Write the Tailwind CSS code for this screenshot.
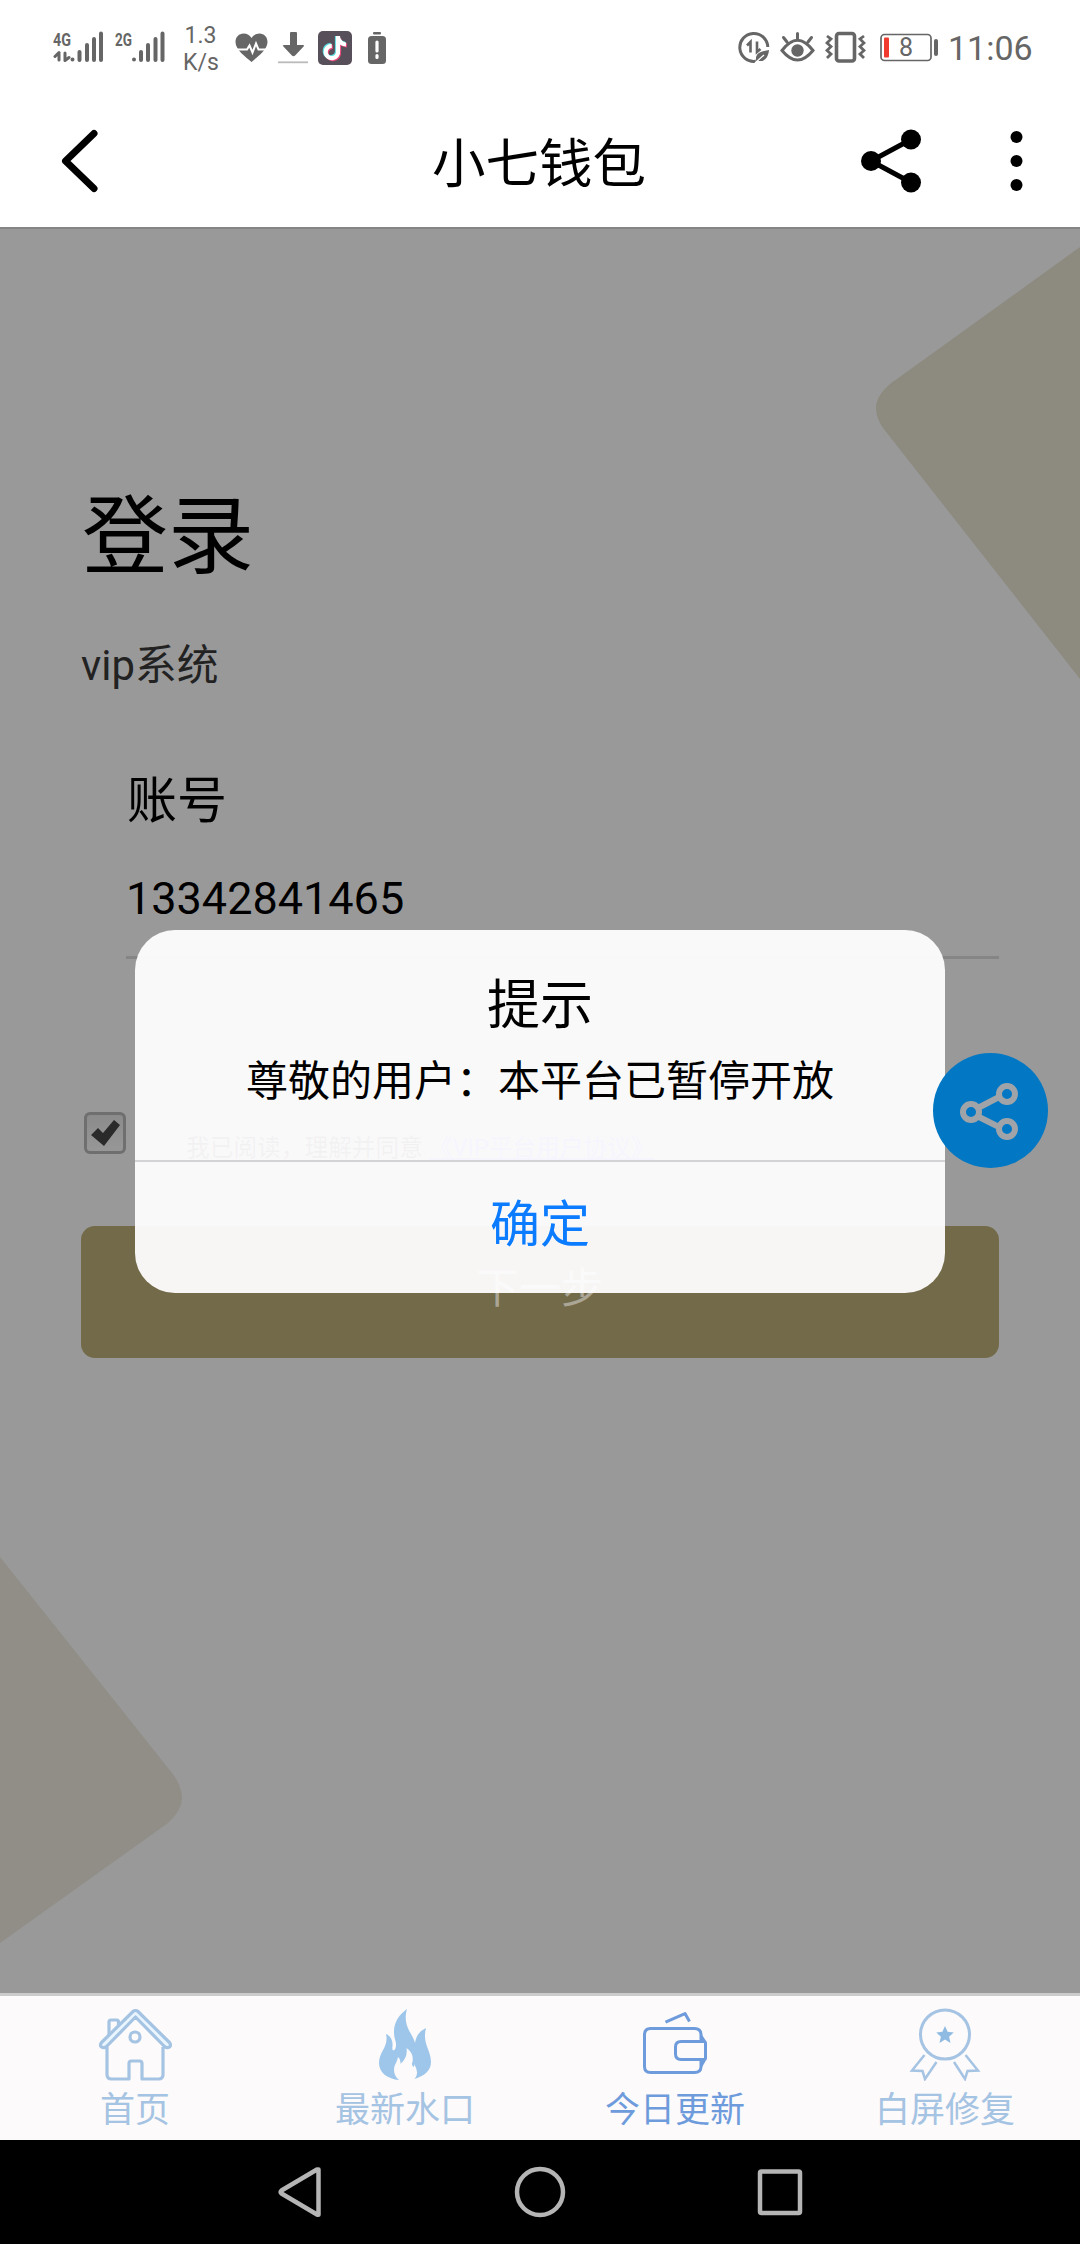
<!DOCTYPE html>
<html lang="zh-CN">
<head>
<meta charset="utf-8">
<title>小七钱包</title>
<script src="https://cdn.jsdelivr.net/npm/@tailwindcss/browser@4"></script>
</head>
<body class="bg-white">
<div class="relative flex h-[2244px] w-[1080px] flex-col overflow-hidden font-['Roboto','Noto_Sans_CJK_SC',sans-serif] text-black">

  <!-- status bar -->
  <div class="flex h-24 shrink-0 items-center bg-white pl-[53px] pr-[49px] text-[#666]">
    <svg class="h-9 w-[51px]" viewBox="53 30 51 36" fill="none" stroke="currentColor" stroke-width="4" stroke-linecap="round">
      <text x="53" y="45.500" textLength="18" lengthAdjust="spacingAndGlyphs" font-family="Roboto" font-weight="700" font-size="18.500" fill="currentColor" stroke="none">4G</text>
      <path d="M59 53v7M65 53v7M59 52.500l-4 4M65 60.500l4-3" stroke-width="3"/>
      <path d="M72.500 59.500v0M79.500 52v8M87 45v15M94 39v21M101 33.500v26.500"/>
    </svg>
    <svg class="ml-[11px] h-9 w-[50px]" viewBox="115 30 50 36" fill="none" stroke="currentColor" stroke-width="4" stroke-linecap="round">
      <text x="115" y="45.500" textLength="17" lengthAdjust="spacingAndGlyphs" font-family="Roboto" font-weight="700" font-size="18.500" fill="currentColor" stroke="none">2G</text>
      <path d="M134 59.500v0M141 52v8M148 45v15M155.500 39v21M162.500 33.500v26.500"/>
    </svg>
    <div class="ml-[18px] w-[35px] whitespace-nowrap pt-0.5 text-center text-[23px]/[27px]">1.3<br>K/s</div>
    <svg class="ml-[17px] h-9 w-[33px]" viewBox="235 30 33 36">
      <path fill="currentColor" d="M251.500 62C246 57 235.500 50 235.500 42c0-5 3.500-8.500 8-8.500 3.500 0 6.500 2 8 4.500 1.500-2.500 4.500-4.500 8-4.500 4.500 0 8 3.500 8 8.500 0 8-10.500 15-16 20z"/>
      <path d="M236 49.500h11l2.500-4 3 7 3.500-9 2.500 6h9" fill="none" stroke="#fff" stroke-width="2"/>
    </svg>
    <svg class="ml-[10px] h-9 w-[30px]" viewBox="278 30 30 36">
      <path fill="currentColor" d="M290 33q0-1 1-1h5q1 0 1 1v12h6q2 0 .6 1.500l-8.500 9q-1.600 1.600-3.200 0l-8.500-9q-1.400-1.500.6-1.500h6z"/>
      <path d="M278 62.300h30" stroke="#bbb" stroke-width="1.800"/>
    </svg>
    <svg class="ml-[10px] h-9 w-[34px]" viewBox="318 30 34 36" fill="none" stroke-width="4.200">
      <rect x="318" y="31" width="34" height="34" rx="5" fill="#57505b"/>
      <path d="M338 37v14a6.200 6.200 0 1 1-6.200-5.200M338 37.500q1.500 6.500 8 7" stroke="#e8487a" transform="translate(1 1)"/>
      <path d="M338 37v14a6.200 6.200 0 1 1-6.200-5.200M338 37.500q1.500 6.500 8 7" stroke="#5edce0" transform="translate(-1 -1)"/>
      <path d="M338 36v15a6.200 6.200 0 1 1-6.200-5.200M338 37.500q1.500 6.500 8 7" stroke="#fff"/>
    </svg>
    <svg class="ml-[15px] h-9 w-5" viewBox="367 30 20 36">
      <rect x="373" y="32" width="8" height="2.500" rx="1" fill="currentColor"/>
      <rect x="368" y="36" width="18" height="28" rx="3.500" fill="currentColor"/>
      <path d="M377 42v9M377 55.500v2" stroke="#fff" stroke-width="3.200" stroke-linecap="round"/>
    </svg>

    <svg class="ml-auto h-9 w-8" viewBox="738 30 32 36" fill="none" stroke="currentColor" stroke-width="3">
      <path d="M755.500 61.300A14 14 0 1 1 767.800 47"/>
      <path d="M750.500 52.500V42l-3.500 3.500M757 41.500V52l3.500-3" stroke-width="2.600"/>
      <path d="M769 50c-7 1-13.500 3-13 9l-1.500 3.500 3-2c7 2.500 11-3.500 11.500-10.500z" fill="currentColor" stroke="none"/>
      <path d="M755 63l9-8" stroke="#fff" stroke-width="1.300"/>
    </svg>
    <svg class="ml-[10px] h-9 w-[35px]" viewBox="780 30 35 36" fill="none" stroke="currentColor" stroke-width="3" stroke-linecap="round">
      <path d="M782 50.500q15.500-20.500 31 0q-15.500 19-31 0zM797.500 33.500v5M783.500 37.500l3.500 4.500M811.500 37.500l-3.500 4.500"/>
      <circle cx="797.500" cy="50.500" r="6.200" fill="currentColor" stroke="none"/>
    </svg>
    <svg class="ml-[10px] h-9 w-[41px]" viewBox="825 30 41 36" fill="none" stroke="currentColor" stroke-width="3">
      <rect x="836.500" y="33.500" width="18" height="27.500" rx="2.500" stroke-width="3.600"/>
      <path d="M827 36l4 3-4 4 4 3.500-4 4 4 3.500-4 4M864 36l-4 3 4 4-4 3.500 4 4-4 3.500 4 4" stroke-width="2.800"/>
    </svg>
    <svg class="ml-[14px] h-9 w-[58px]" viewBox="880 30 58 36">
      <rect x="881" y="34.500" width="50" height="26" rx="3.500" fill="none" stroke="currentColor" stroke-width="1.700"/>
      <rect x="884" y="37.500" width="5" height="20" rx="1" fill="#f03a2e"/>
      <rect x="934" y="39" width="4" height="17" rx="2" fill="currentColor"/>
      <text x="906" y="56" text-anchor="middle" font-family="Roboto" font-size="25" fill="currentColor">8</text>
    </svg>
    <div class="ml-[10px] w-[83px] whitespace-nowrap text-[34px]/[40px]">11:06</div>
  </div>

  <!-- title bar -->
  <header class="flex h-[131px] shrink-0 items-center bg-white pb-0.5 pl-[60px] pr-[56px]">
    <svg class="h-[66px] w-[40px]" viewBox="60 128 40 66"><path d="M94 133.500L65.500 161l28.500 27.500" fill="none" stroke="#000" stroke-width="7" stroke-linecap="round" stroke-linejoin="round"/></svg>
    <h1 class="ml-[332px] w-[215px] whitespace-nowrap pt-[9px] text-[53.500px]/[70px]">小七钱包</h1>
    <svg class="ml-auto h-[66px] w-[62px]" viewBox="860 128 62 66"><path d="M911 139.500L871 161l40 21.500" fill="none" stroke="#000" stroke-width="5"/><circle cx="871" cy="161" r="10"/><circle cx="911" cy="139.500" r="10"/><circle cx="911" cy="182.500" r="10"/></svg>
    <svg class="ml-[86px] h-[66px] w-4" viewBox="1008 128 16 66"><circle cx="1016.500" cy="137" r="6"/><circle cx="1016.500" cy="161" r="6"/><circle cx="1016.500" cy="185" r="6"/></svg>
  </header>

  <!-- login page under the dimmed backdrop -->
  <main class="relative h-[1766px] shrink-0 border-t-2 border-[#858585] bg-[#999] pl-[81px]">
    <svg class="absolute -top-0.5 left-0 h-[1766px] w-[1080px]" viewBox="0 227 1080 1766">
      <path d="M1080 247L892 382.500Q876 395 876 408Q876 418 883 428L1080 679z" fill="#8d8b80"/>
      <path d="M0 1557L172 1773Q182 1786 182 1798Q182 1810 168 1823L0 1943z" fill="#908e87"/>
    </svg>
    <div class="relative">
      <h2 class="pl-px pt-[249px] text-[86px]/[120px]">登录</h2>
      <p class="mt-[38px] text-[41.800px]/[60px] text-[#222]">vip系统</p>
      <div class="ml-[45px] w-[873px] border-b-[3px] border-[#858585] pb-[29px]">
        <div class="mt-[70px] pl-px text-[50px]/[70px]">账号</div>
        <div class="mt-[35px] text-[45px]/[56px]">13342841465</div>
      </div>
      <div class="mt-[153px] flex h-[44px] items-start pl-[3px]">
        <span class="flex h-[42px] w-[42px] items-center justify-center rounded-[6px] border-[3px] border-[#6f6f6f] bg-linear-to-b from-[#8b8b8b] to-[#979797]">
          <svg class="h-9 w-9" viewBox="0 0 36 36"><path d="M4 20l7-7 5 5L27 5l6 5-16 21z" fill="#2a2a2a"/></svg>
        </span>
        <span class="ml-[60px] mt-[19px] whitespace-nowrap text-[23.700px]/[34px] text-[#111]">我已阅读，理解并同意 <span class="text-[#5555dd] underline">《VIP平台用户协议》</span></span>
      </div>
      <div class="mt-[70px] flex h-[132px] w-[918px] justify-center rounded-[14px] bg-[#736a49] pt-[33px] text-[42px]/[60px] text-[#aaa595]">下一步</div>
    </div>
  </main>

  <!-- bottom tabs -->
  <nav class="grid h-[147px] shrink-0 grid-cols-4 border-t-[3px] border-[#cbcbcb] bg-[#fcfafb] text-[35px]/[40px] text-[#a5c3e2]">
    <div class="flex flex-col items-center pt-[11px]">
      <svg class="h-[74px] w-[74px]" viewBox="98 2006 74 74" fill="none" stroke="currentColor" stroke-width="3.200" stroke-linejoin="round">
        <path d="M107 2046v27.500q0 4.500 4.500 4.500h17.500v-15.500q0-2.500 2.500-2.500h8q2.500 0 2.500 2.500v15.500h16.500q4.500 0 4.500-4.500v-27.500"/>
        <path d="M109 2034v-13q0-2 2-2h5.500q2 0 2 2v3.500"/>
        <path d="M135.500 2009.500q-1.500 0-2.500 1l-31.500 31q-2 2.500 0 4.500 2.500 1.500 5-.5l29-29.500 29 29.500q2.500 2 5 .5 2-2 0-4.500l-31.500-31q-1-1-2.500-1z" fill="#eaf6ff"/>
        <circle cx="135" cy="2036" r="5"/>
      </svg>
      <span class="mt-2.5">首页</span>
    </div>
    <div class="flex flex-col items-center pt-[11px]">
      <svg class="h-[74px] w-[56px]" viewBox="377 2006 56 74" fill="#9dc6ea">
        <path d="M407 2008C397 2015 391 2026 395.500 2040C398 2050 391 2053 392.500 2045C393 2040 391 2035 386 2033C389 2046 379 2050 379 2062C379 2072 388 2078 399 2079C393 2074 393 2067 396 2062Q397.500 2059 398 2056Q401 2058 400.500 2063Q408 2056 406.500 2047Q414 2052 412.500 2061Q411 2064 413.500 2066Q414.500 2065 414 2063Q420 2072 414.500 2078C424 2075 431 2070 431 2061C431 2049 422 2043 426 2027C418 2031 416 2036 415 2042C413 2033 402 2025 407 2008z"/>
      </svg>
      <span class="mt-2.5">最新水口</span>
    </div>
    <div class="flex flex-col items-center pt-[11px] text-[#6e9bdb]">
      <svg class="h-[74px] w-[68px]" viewBox="641 2006 68 74" fill="none" stroke="currentColor" stroke-width="3" stroke-linejoin="round">
        <path d="M701 2039v-5q0-6.500-6.500-6.500h-44q-6 0-6 6.500v31.500q0 6 6 6h44q6.500 0 6.500-6v-6"/>
        <path d="M681 2040.500h23q1.500 0 1.500 2v14.500q0 1.500-1.500 1.500h-23q-5.500 0-5.500-5.500v-7q0-5.500 5.500-5.500zM701 2035l4 6M701 2065l4-7"/>
        <path d="M665.500 2021L685 2012.500L689.500 2020.500" stroke-width="3"/>
      </svg>
      <span class="mt-2.5">今日更新</span>
    </div>
    <div class="flex flex-col items-center pt-[11px]">
      <svg class="h-[74px] w-[72px]" viewBox="909 2006 72 74" fill="none" stroke="currentColor" stroke-width="3">
        <circle cx="945" cy="2033.500" r="24.500"/>
        <path d="M945 2025l2.600 5.800 6.100.7-4.600 4.200 1.400 6.200-5.500-3.300-5.500 3.300 1.400-6.200-4.600-4.200 6.100-.7z" fill="#8fbbe2" stroke="none"/>
        <path d="M924.500 2054l-12.500 15.500 10.500.5 2.500 8 11.500-17M965.500 2054l12.500 15.500-10.500.5-2.500 8-11-17" stroke-width="2.500"/>
      </svg>
      <span class="mt-2.5">白屏修复</span>
    </div>
  </nav>

  <!-- system navigation -->
  <div class="flex h-[104px] shrink-0 items-center justify-center bg-black">
    <svg class="h-[60px] w-[540px]" viewBox="270 2162 540 60" fill="none" stroke="#b5b5b5" stroke-width="4.500" stroke-linejoin="round">
      <path d="M318.500 2169.500v45q0 .5-1.500 0l-35.500-21q-1.500-1.500 0-3l35.500-21z"/>
      <circle cx="540" cy="2192" r="23"/>
      <rect x="760" y="2171.500" width="40" height="41.500" rx="1.500"/>
    </svg>
  </div>

  <!-- dialog -->
  <div class="absolute left-[135px] top-[930px] flex h-[363px] w-[810px] flex-col overflow-hidden rounded-[40px] bg-[#fffeff]/95 text-center">
    <div class="flex h-[230px] flex-col items-center pt-[41px]">
      <div class="text-[53px]/[70px]">提示</div>
      <div class="mt-[11px] whitespace-nowrap text-[42px]/[60px]">尊敬的用户：本平台已暂停开放</div>
    </div>
    <div class="flex-1 border-t-2 border-[#d3d3d6] pt-[28px] text-[50px]/[70px] text-[#0b7bff]">确定</div>
  </div>

  <!-- floating share button -->
  <div class="absolute left-[933px] top-[1053px] flex h-[115px] w-[115px] items-center justify-center rounded-full bg-[#0278c5]">
    <svg class="mr-1 h-[60px] w-[60px]" viewBox="957 1081 60 60" fill="none" stroke="#a0a4a8" stroke-width="6">
      <path d="M975 1108.500l23-12M975 1116l23 11.500"/>
      <circle cx="969" cy="1112" r="8"/><circle cx="1005" cy="1094" r="8"/><circle cx="1005" cy="1129" r="8"/>
    </svg>
  </div>
</div>
</body>
</html>
